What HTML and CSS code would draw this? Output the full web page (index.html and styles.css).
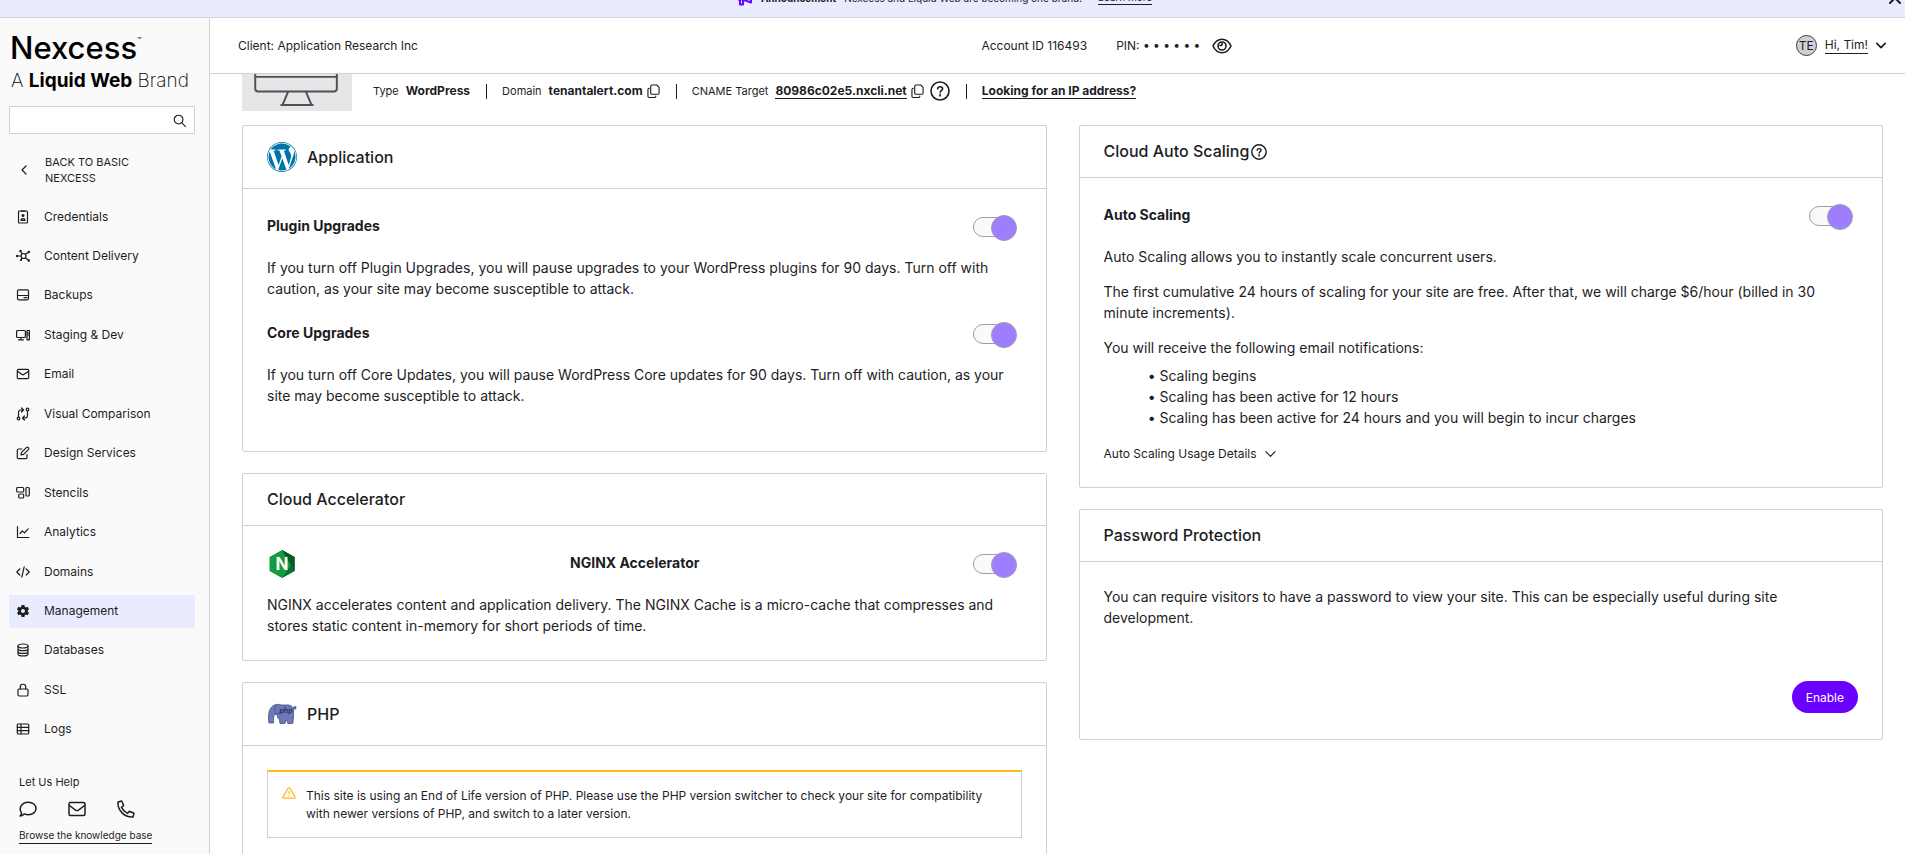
FILE: index.html
```html
<!DOCTYPE html>
<html lang="en">
<head>
<meta charset="utf-8">
<title>Management - Nexcess</title>
<meta name="viewport" content="width=device-width, initial-scale=1">
<link rel="stylesheet" href="styles.css">
</head>
<body>
<svg class="sprite" aria-hidden="true">
  <symbol id="copy" viewBox="0 0 14 16"><path d="M5.500 1h5l2.500 2.500v6a1.500 1.500 0 0 1-1.500 1.500h-6A1.500 1.500 0 0 1 4 9.500v-7A1.500 1.500 0 0 1 5.500 1zM2.500 4.500A1.500 1.500 0 0 0 1 6v7a1.500 1.500 0 0 0 1.500 1.500h5.500a1.500 1.500 0 0 0 1.500-1.500"/></symbol>
  <symbol id="help" viewBox="0 0 20 20"><circle cx="10" cy="10" r="9"/><path d="M7.600 7.800c.2-1.400 1.200-2 2.500-2s2.500.8 2.500 2c0 1.700-2.400 1.800-2.400 3.500M10.100 13.300v1.600"/></symbol>
  <symbol id="mail" viewBox="0 0 18 16"><rect x="1" y="1.500" width="16" height="13" rx="1.500"/><path d="M1.500 4.500l6 4.600q1.500 1 3 0l6-4.600"/></symbol>
  <symbol id="chevron" viewBox="0 0 12 8"><path d="M1 1.500l5 5 5-5"/></symbol>
</svg>

<div class="app">
  <div class="banner">
    <div class="banner-row">
      <svg class="line megaphone" viewBox="0 0 16 16"><path d="M1.500 5h4.500l8-3.500v11L6 9.500H1.500zM3 9.500v5h3v-5M14 6v3"/></svg>
      <strong>Announcement</strong>
      <span>Nexcess and Liquid Web are becoming one brand!</span>
      <a href="#" class="underlined learn">Learn more</a>
    </div>
    <button class="plain close" aria-label="Dismiss announcement"><svg class="line" viewBox="0 0 12 12"><path d="M1 1l10 10M11 1L1 11"/></svg></button>
  </div>

  <aside class="sidebar">
    <div class="brand">
      <div class="brand-name">Nexcess<sup>™</sup></div>
      <div class="brand-sub">A <b>Liquid Web</b> Brand</div>
    </div>
    <form class="search">
      <input type="search" aria-label="Search">
      <button class="plain" type="button" aria-label="Search"><svg class="line" viewBox="0 0 14 14"><circle cx="6" cy="6" r="4.700"/><path d="M9.500 9.500l4 4"/></svg></button>
    </form>
    <a href="#" class="back">
      <svg class="line" viewBox="0 0 6 10"><path d="M5 1L1 5l4 4"/></svg>
      <span>BACK TO BASIC NEXCESS</span>
    </a>
    <nav class="nav" aria-label="Site">
      <a href="#"><svg class="line" viewBox="0 0 14 14"><rect x="2.500" y="1" width="9" height="12" rx="1"/><path d="M5 1.200h4M5 10.300c0-2.300 4-2.300 4 0z"/><circle class="dot" cx="7" cy="5.500" r="1.500"/></svg>Credentials</a>
      <a href="#"><svg class="line" viewBox="0 0 14 14"><circle cx="7.500" cy="7" r="2.500"/><path d="M1 7h4M6 5L4.500 2M9.300 5.300L13 3M9.300 8.800l3.200 2.400M6 9l-1 2"/><g class="dot"><circle cx="1.200" cy="7" r="1.200"/><circle cx="4.500" cy="2" r="1.200"/><circle cx="12.800" cy="3" r="1.200"/><circle cx="12.800" cy="11.500" r="1.300"/><circle cx="5" cy="11" r="1.100"/></g></svg>Content Delivery</a>
      <a href="#"><svg class="line" viewBox="0 0 14 14"><rect x="1.500" y="1.800" width="11" height="10" rx="1.200"/><path d="M1.500 7.500h11M8 9.700h1M10 9.700h1"/></svg>Backups</a>
      <a href="#"><svg class="line" viewBox="0 0 14 14"><rect x=".6" y="2.500" width="8.800" height="7" rx="1"/><path d="M2.500 11.800h5M5 9.500v2M11 2.500h2.400v9.300H11zM11 5h2M11 7h2"/></svg>Staging &amp; Dev</a>
      <a href="#"><svg class="line" viewBox="0 0 14 14"><rect x="1.300" y="2.300" width="11.400" height="9.400" rx="1.200"/><path d="M1.800 4.500L7 8l5.200-3.500"/></svg>Email</a>
      <a href="#"><svg class="line" viewBox="0 0 14 14"><circle cx="2.500" cy="11.500" r="1.300"/><circle cx="11.500" cy="2.500" r="1.300"/><path d="M2.500 10V5.500Q2.500 3 5 3h2M5.500 1l2 2-2 2M11.500 4v4.500q0 2.500-2.500 2.500H7M8.500 9l-2 2 2 2"/></svg>Visual Comparison</a>
      <a href="#"><svg class="line" viewBox="0 0 14 14"><path d="M6 3H2.500Q1.300 3 1.300 4.200v7.300q0 1.200 1.200 1.200h7.300q1.200 0 1.200-1.200V8.500M5 9l.6-2.600 5-5q1-.6 1.800.2t.2 1.800l-5 5z"/></svg>Design Services</a>
      <a href="#"><svg class="line" viewBox="0 0 14 14"><rect x=".7" y="1.500" width="7" height="4.500" rx="1"/><rect x="2.700" y="8" width="5" height="4" rx="1"/><rect x="10" y="1.500" width="3.300" height="8.500" rx="1"/></svg>Stencils</a>
      <a href="#"><svg class="line" viewBox="0 0 14 14"><path d="M1.500 1.500v11h11.500M4 8.500l2.300-2.600 2.200 2 3.700-4"/></svg>Analytics</a>
      <a href="#"><svg class="line" viewBox="0 0 14 14"><path d="M3.800 4L.8 7l3 3M10.200 4l3 3-3 3M8.200 1.800L5.800 12.200"/></svg>Domains</a>
      <a href="#" class="active" aria-current="page"><svg viewBox="0 0 14 14"><path class="dot" fill-rule="evenodd" d="M5.600 1h2.800l.4 1.800 1.100.6 1.700-.6 1.400 2.500-1.300 1.200v1l1.300 1.200-1.400 2.500-1.700-.6-1.100.6-.4 1.800H5.600l-.4-1.800-1.100-.6-1.700.6L1 8.700l1.300-1.200v-1L1 5.300l1.400-2.500 1.700.6 1.100-.6zM7 5a2 2 0 1 0 0 4 2 2 0 0 0 0-4z"/></svg>Management</a>
      <a href="#"><svg class="line" viewBox="0 0 14 14"><ellipse cx="7" cy="3" rx="5" ry="2"/><path d="M2 3v8c0 2.600 10 2.600 10 0V3M2 5.700c0 2.600 10 2.600 10 0M2 8.400c0 2.600 10 2.600 10 0"/></svg>Databases</a>
      <a href="#"><svg class="line" viewBox="0 0 14 14"><rect x="2" y="6" width="10" height="7" rx="1.200"/><path d="M4.300 6V3.700C4.300.4 9.700.4 9.700 3.700V6"/></svg>SSL</a>
      <a href="#"><svg class="line" viewBox="0 0 14 14"><rect x="1.300" y="2" width="11.400" height="10" rx="1"/><path d="M1.300 5.300h11.400M1.300 8.700h11.400M5 2v10"/></svg>Logs</a>
    </nav>
    <div class="support">
      <span>Let Us Help</span>
      <div class="support-icons">
        <a href="#" aria-label="Chat"><svg class="line" viewBox="0 0 18 16"><path d="M1 15c1-.9 1.500-1.800 1.600-3C-.8 7.500 2.500 1.200 9.300 1.200c4.500 0 7.700 2.700 7.700 6.200s-3.200 6.300-7.700 6.300c-1.400 0-2.700-.3-3.800-.8C4.200 14 2.700 15 1 15z"/></svg></a>
        <a href="#" aria-label="Email"><svg class="line"><use href="#mail"/></svg></a>
        <a href="#" aria-label="Phone"><svg class="line" viewBox="0 0 18 18"><path d="M1 2l3.700-1 2 4.500-2.200 1.900c1.200 2.700 3.200 4.700 6 6l1.900-2.200 4.600 2-1 3.800C7.500 17.500.5 10.500 1 2z"/></svg></a>
      </div>
      <a href="#" class="underlined kb">Browse the knowledge base</a>
    </div>
  </aside>

  <header class="topbar">
    <span>Client: Application Research Inc</span>
    <div class="account">
      <span>Account ID 116493</span>
      <span class="pin">PIN: • • • • • •</span>
      <button class="plain eye" aria-label="Show PIN"><svg class="line" viewBox="0 0 20 16"><path d="M1 8C3 3.800 6 1.200 10 1.200S17 3.800 19 8c-2 4.200-5 6.800-9 6.800S3 12.200 1 8z"/><circle cx="10" cy="8" r="4"/><path d="M10 5.500c.3 1.300-.6 2.200-2 2"/></svg></button>
    </div>
    <button class="plain user">
      <span class="avatar">TE</span>
      <span class="underlined">Hi, Tim!</span>
      <svg class="line chev"><use href="#chevron"/></svg>
    </button>
  </header>

  <main class="viewport">
    <div class="content">
      <section class="summary">
        <div class="thumb"><svg viewBox="0 0 90 70"><path d="M2 4v47q0 3 3 3h78q3 0 3-3V4q0-3-3-3H5Q2 1 2 4zM2 39h84M36 54l-6 14M54 54l6 14M28 68h34"/><circle cx="44" cy="21" r="10"/></svg></div>
        <dl class="facts">
          <div><dt>Type</dt><dd>WordPress</dd></div>
          <div><dt>Domain</dt><dd>tenantalert.com<button class="plain copy" aria-label="Copy domain"><svg class="line"><use href="#copy"/></svg></button></dd></div>
          <div><dt>CNAME Target</dt><dd><a href="#" class="underlined">80986c02e5.nxcli.net</a><button class="plain copy" aria-label="Copy target"><svg class="line"><use href="#copy"/></svg></button><button class="plain big-help" aria-label="About CNAME"><svg class="line"><use href="#help"/></svg></button></dd></div>
          <div><dd><a href="#" class="underlined">Looking for an IP address?</a></dd></div>
        </dl>
      </section>

      <div class="columns">
        <div class="column">
          <section class="card">
            <h2><svg class="logo" viewBox="0 0 24 24" fill="#0073aa"><path d="M21.469 6.825c.84 1.537 1.318 3.300 1.318 5.175 0 3.979-2.156 7.456-5.363 9.325l3.295-9.527c.615-1.540.820-2.771.820-3.864 0-.405-.026-.780-.070-1.110m-7.981.105c.647-.030 1.232-.105 1.232-.105.582-.075.514-.930-.067-.899 0 0-1.755.135-2.880.135-1.064 0-2.850-.150-2.850-.150-.585-.030-.661.855-.075.885 0 0 .540.061 1.125.090l1.680 4.605-2.370 7.080L5.354 6.900c.649-.030 1.234-.100 1.234-.100.585-.075.516-.930-.065-.896 0 0-1.746.138-2.874.138-.200 0-.438-.008-.690-.015C4.911 3.150 8.235 1.215 12 1.215c2.809 0 5.365 1.072 7.286 2.833-.046-.003-.091-.009-.141-.009-1.060 0-1.812.923-1.812 1.914 0 .890.513 1.643 1.060 2.531.411.720.890 1.643.890 2.977 0 .915-.354 1.994-.821 3.479l-1.075 3.585-3.900-11.610.001.014zM12 22.784c-1.059 0-2.081-.153-3.048-.437l3.237-9.406 3.315 9.087c.024.053.050.101.078.149-1.120.393-2.325.609-3.582.609M1.211 12c0-1.564.336-3.050.935-4.390L7.290 21.709C3.694 19.960 1.212 16.271 1.211 12M12 0C5.385 0 0 5.385 0 12s5.385 12 12 12 12-5.385 12-12S18.615 0 12 0m0 .55A11.450 11.450 0 1 1 12 23.450 11.450 11.450 0 0 1 12 .55"/></svg>Application</h2>
            <div class="card-body roomy">
              <div class="setting"><label for="plugins">Plugin Upgrades</label><input class="toggle" type="checkbox" id="plugins" checked></div>
              <p>If you turn off Plugin Upgrades, you will pause upgrades to your WordPress plugins for 90 days. Turn off with caution, as your site may become susceptible to attack.</p>
              <div class="setting"><label for="core">Core Upgrades</label><input class="toggle" type="checkbox" id="core" checked></div>
              <p>If you turn off Core Updates, you will pause WordPress Core updates for 90 days. Turn off with caution, as your site may become susceptible to attack.</p>
            </div>
          </section>

          <section class="card">
            <h2>Cloud Accelerator</h2>
            <div class="card-body">
              <div class="setting">
                <svg class="logo" viewBox="0 0 30 30"><path fill="#149b3b" d="M15 1l12.500 7v14L15 29 2.500 22V8z"/><path fill="#087032" d="M15 1l12.500 7v14L15 29l9-13z"/><path fill="#055a2c" d="M15 1l12.500 7v14z"/><text x="15" y="21" text-anchor="middle" font-size="17" font-weight="700" fill="#fff">N</text></svg>
                <label for="nginx">NGINX Accelerator</label><input class="toggle" type="checkbox" id="nginx" checked>
              </div>
              <p>NGINX accelerates content and application delivery. The NGINX Cache is a micro-cache that compresses and stores static content in-memory for short periods of time.</p>
            </div>
          </section>

          <section class="card">
            <h2><svg class="logo" viewBox="0 0 30 30"><path fill="#6b79b8" stroke="#464f83" stroke-width=".8" d="M2 24c-1-5-.5-12 1.500-14.500C6 5.500 11 4.500 14 6h7c2.500 0 4 1 4.500 2.500l3.500-1-.3 2.500-2.400.2c.5 3 .3 9.500-.5 14.300h-5l-.8-3-1.500.2-.5 2.800h-5l-.7-5-1.800-.6-.2-3.400H7.500c-1 1.500-1.300 5-.8 8.500z"/><path fill="none" stroke="#464f83" stroke-width=".8" d="M9 7c-2 3-1.500 6 .5 8 2 0 3.500-1.500 4-4"/><text x="19" y="14" text-anchor="middle" font-size="7" font-style="italic" font-weight="700" fill="#2d3360">php</text></svg>PHP</h2>
            <div class="card-body">
              <div class="alert" role="alert">
                <svg viewBox="0 0 14 12"><path d="M7 .8q.6 0 1 .7l5 8.300q.5 1.400-1 1.400H2Q.5 11.200 1 9.800l5-8.300q.4-.7 1-.7zM7 4v3.300M7 8.400v1.200"/></svg>
                <span>This site is using an End of Life version of PHP. Please use the PHP version switcher to check your site for compatibility with newer versions of PHP, and switch to a later version.</span>
              </div>
            </div>
          </section>
        </div>

        <div class="column">
          <section class="card">
            <h2>Cloud Auto Scaling<button class="plain small-help" aria-label="About auto scaling"><svg class="line"><use href="#help"/></svg></button></h2>
            <div class="card-body">
              <div class="setting"><label for="scaling">Auto Scaling</label><input class="toggle" type="checkbox" id="scaling" checked></div>
              <p>Auto Scaling allows you to instantly scale concurrent users.</p>
              <p>The first cumulative 24 hours of scaling for your site are free. After that, we will charge $6/hour (billed in 30 minute increments).</p>
              <p>You will receive the following email notifications:</p>
              <ul>
                <li>Scaling begins</li>
                <li>Scaling has been active for 12 hours</li>
                <li>Scaling has been active for 24 hours and you will begin to incur charges</li>
              </ul>
              <button class="plain details">Auto Scaling Usage Details <svg class="line"><use href="#chevron"/></svg></button>
            </div>
          </section>

          <section class="card">
            <h2>Password Protection</h2>
            <div class="card-body">
              <p class="lead">You can require visitors to have a password to view your site. This can be especially useful during site development.</p>
              <div class="actions"><button class="primary">Enable</button></div>
            </div>
          </section>
        </div>
      </div>
    </div>
  </main>
</div>
</body>
</html>
```

FILE: styles.css
```css
* { box-sizing: border-box; }

body {
  margin: 0;
  color: #1d1d1f;
  background: #fff;
  font-family: Inter, "Liberation Sans", sans-serif;
  font-size: 12px;
  line-height: 18px;
}

a { color: inherit; text-decoration: none; }
svg { display: block; flex: none; }
.sprite { position: absolute; width: 0; height: 0; }
.line { fill: none; stroke: currentColor; stroke-width: 1.2; stroke-linecap: round; stroke-linejoin: round; }
.dot { fill: currentColor; stroke: none; }
.plain { padding: 0; border: 0; background: none; color: inherit; font: inherit; cursor: pointer; }
.underlined { border-bottom: 1px solid currentColor; }

.app {
  display: grid;
  grid-template: 18px 56px 1fr / 210px 1fr;
  height: 100vh;
  overflow: hidden;
}

/* Announcement */
.banner {
  grid-column: 1 / -1;
  display: flex;
  align-items: flex-end;
  overflow: hidden;
  background: #e9ecff;
  border-bottom: 1px solid #d0d1dc;
  font-size: 10px;
}
.banner-row { flex: 1; display: flex; align-items: center; justify-content: center; gap: 8px; height: 39px; }
.banner-row .learn { margin-left: 8px; line-height: 13px; }
.megaphone { width: 16px; height: 16px; color: #6a00ff; stroke-width: 2; }
.close { display: flex; align-items: center; height: 39px; padding-right: 4px; }
.close svg { width: 12px; height: 12px; stroke-width: 2; }

/* Sidebar */
.sidebar {
  grid-row: 2 / 4;
  display: flex;
  flex-direction: column;
  min-height: 0;
  padding: 10px 14px 10px 9px;
  background: #fafafa;
  border-right: 1px solid #d0d0d3;
}
.brand { padding-left: 1px; color: #000; white-space: nowrap; }
.brand-name { font-size: 31px; font-weight: 500; line-height: 40px; }
.brand-name sup { font-size: 7px; line-height: 7px; vertical-align: 16px; }
.brand-sub { padding-left: 1px; font-size: 19px; font-weight: 200; line-height: 26px; }
.brand-sub b { font-weight: 700; }
.search { display: flex; height: 28px; margin-top: 12px; background: #fff; border: 1px solid #d0d0d3; }
.search input { flex: 1; min-width: 0; border: 0; background: none; outline: 0; }
.search button { padding: 0 8px; }
.search svg { width: 13px; height: 13px; }
.back { display: flex; align-items: center; gap: 18px; margin: 20px 0 14px; padding-left: 12px; font-size: 11px; line-height: 16px; }
.back svg { width: 6px; height: 10px; }
.back span { width: 100px; }
.nav { flex: 1; display: flex; flex-direction: column; justify-content: space-between; }
.nav a { display: flex; align-items: center; gap: 14px; height: 33px; padding-left: 7px; }
.nav svg { width: 14px; height: 14px; }
.nav .active { background: #e9ecff; }
.support { display: flex; flex-direction: column; align-items: flex-start; margin-top: 27px; padding-left: 10px; font-size: 11px; }
.support-icons { display: flex; align-items: center; gap: 31px; height: 36px; }
.support-icons svg { width: 18px; height: 18px; stroke-width: 1.5; }
.kb { margin-top: 1px; line-height: 15px; font-size: 10px; }

/* Top bar */
.topbar {
  display: flex;
  align-items: center;
  padding: 0 19px 0 28px;
  border-bottom: 1px solid #d0d0d3;
}
.account { display: flex; align-items: center; margin-left: auto; }
.pin { margin-left: 29px; }
.eye { margin-left: 12px; }
.eye svg { width: 20px; height: 16px; stroke-width: 1.6; }
.user { display: flex; align-items: center; gap: 8px; margin-left: auto; }
.avatar { width: 21px; height: 21px; border: 1px solid #3a3a3f; border-radius: 50%; background: #d0d0d3; line-height: 19px; text-align: center; }
.user .underlined { line-height: 16px; }
.chev { width: 10px; height: 7px; stroke-width: 2; }

/* Scrolled page */
.viewport { min-height: 0; overflow: hidden; }
.content { margin-top: -37px; padding: 0 22px 21px 32px; }
.summary { display: flex; align-items: center; gap: 21px; margin-bottom: 14px; }
.thumb { display: flex; justify-content: center; align-items: flex-end; width: 110px; height: 74px; padding-bottom: 4px; background: #e6e6e6; }
.thumb svg { width: 88px; height: 68px; overflow: visible; fill: none; stroke: #4c4f5e; stroke-width: 2; }
.facts { display: flex; align-items: center; margin: 34px 0 0; }
.facts > div { display: flex; align-items: center; }
.facts > div + div::before { content: ""; width: 1px; height: 15px; margin: 0 15px 0 16px; background: #1d1d1f; }
.facts dt { margin-right: 7px; font-size: 11px; }
.facts dd { display: flex; align-items: center; height: 20px; margin: 0; font-weight: 700; }
.facts .underlined { line-height: 14px; }
.copy { margin-left: 4px; }
.copy svg { width: 13px; height: 15px; }
.big-help { margin-left: 6px; }
.big-help svg { width: 20px; height: 20px; stroke-width: 1.6; }

.columns { display: grid; grid-template-columns: 1fr 1fr; align-items: start; gap: 32px; }
.column { display: grid; gap: 21px; }
.card { border: 1px solid #d0d0d3; border-radius: 2px; }
.card h2 {
  display: flex;
  align-items: center;
  gap: 10px;
  margin: 0;
  padding: 16px 24px;
  border-bottom: 1px solid #d0d0d3;
  font-size: 16px;
  font-weight: 500;
  line-height: 19px;
}
.logo { width: 30px; height: 30px; }
.small-help { margin-left: -8px; }
.small-help svg { width: 16px; height: 16px; stroke-width: 1.8; }
.card-body { padding: 24px; font-size: 14px; line-height: 21px; }
.card-body p { margin: 14px 0 0; }
.card-body .lead { margin: 0; }
.roomy p { margin-bottom: 21px; }
.setting { display: flex; align-items: center; justify-content: space-between; height: 28px; margin-bottom: 16px; }
.card-body .setting + p { margin-top: 0; }
.setting label { margin-bottom: 4px; font-weight: 700; }

.toggle {
  position: relative;
  appearance: none;
  width: 44px;
  height: 24px;
  margin: 0 5px 0 0;
  cursor: pointer;
}
.toggle::before {
  content: "";
  position: absolute;
  inset: 2px 2px 2px 0;
  border: 1px solid #9d9da8;
  border-radius: 10px;
  background: #fafafa;
}
.toggle::after {
  content: "";
  position: absolute;
  right: 0;
  width: 24px;
  height: 24px;
  border: 1px solid #9d9da8;
  border-radius: 50%;
  background: #9f7dff;
}
.toggle:not(:checked)::after { right: auto; left: 0; }

.card-body ul { margin: 7px 0 0; padding-left: 56px; list-style-type: "• "; }
.details { display: flex; align-items: center; gap: 8px; margin-top: 17px; font-size: 12px; line-height: 18px; }
.details svg { width: 11px; height: 8px; }

.alert {
  display: flex;
  gap: 10px;
  padding: 15px 20px 14px 14px;
  border: 1px solid #d0d0d3;
  border-top: 2px solid #ffba20;
  font-size: 12px;
  line-height: 18px;
}
.alert svg { width: 14px; height: 12px; fill: none; stroke: #ffba20; stroke-width: 1.3; stroke-linejoin: round; }

.actions { display: flex; justify-content: flex-end; margin-top: 53px; padding-bottom: 2px; }
.primary {
  height: 32px;
  padding: 0 14px;
  border: 0;
  border-radius: 16px;
  background: #6a00ff;
  color: #fff;
  font: inherit;
  font-size: 12px;
  cursor: pointer;
}
```
